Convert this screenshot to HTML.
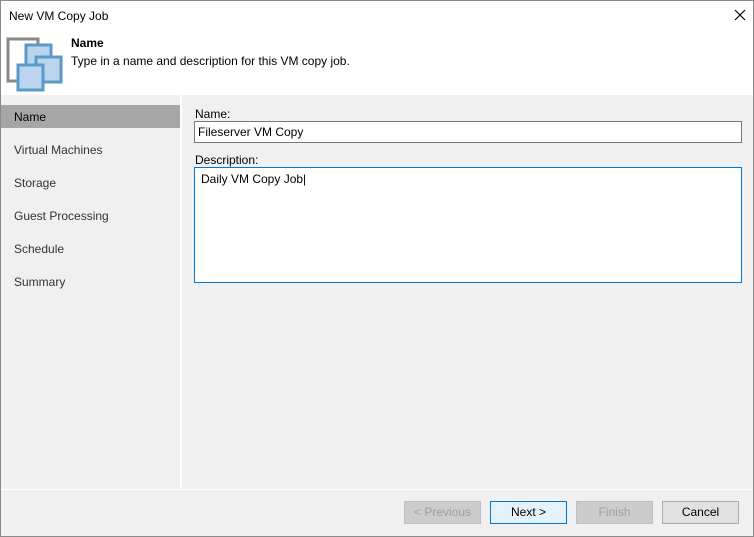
<!DOCTYPE html>
<html><head><style>
body{margin:0;width:754px;height:537px;overflow:hidden;font-family:"Liberation Sans",sans-serif;font-size:12px;color:#000;}
.win{position:absolute;left:0;top:0;width:752px;height:535px;border:1px solid #8a8a8a;background:#f0f0f0;}
.abs{position:absolute}
.btn{position:absolute;top:500px;width:75px;height:21px;border:1px solid #adadad;background:#e1e1e1;text-align:center;line-height:21px;font-size:12px}
.dis{color:#a0a0a0;background:#cccccc;border-color:#bfbfbf}
.nav{position:absolute;left:13px;font-size:12px;color:#333}
input,.ta{position:absolute;border:1px solid #7a7a7a;background:#fff;font:12px "Liberation Sans",sans-serif;box-sizing:border-box}
</style></head><body>
<div class="win">
<div class="abs" style="left:0;top:0;width:752px;height:94px;background:#fff"></div>
<div class="abs" style="left:8px;top:8px">New VM Copy Job</div>
<svg class="abs" style="left:733px;top:8px" width="12" height="12"><path d="M1 1L11 11M11 1L1 11" stroke="#000" stroke-width="1.2"/></svg>
<svg class="abs" style="left:4px;top:35px" width="60" height="58">
<path d="M3 33V3h30v8" fill="none" stroke="#888" stroke-width="3"/>
<path d="M3 33v12h12" fill="none" stroke="#888" stroke-width="3"/>
<rect x="21" y="9" width="25" height="25" fill="#bcd5ee" stroke="#5a9ac8" stroke-width="3"/>
<rect x="31" y="21" width="25" height="25" fill="#bcd5ee" stroke="#5a9ac8" stroke-width="3"/>
<rect x="13" y="29" width="25" height="25" fill="#bcd5ee" stroke="#5a9ac8" stroke-width="3"/>
</svg>
<div class="abs" style="left:70px;top:35px;font-weight:bold">Name</div>
<div class="abs" style="left:70px;top:53px">Type in a name and description for this VM copy job.</div>
<div class="abs" style="left:179px;top:94px;width:2px;height:394px;background:#fff"></div>
<div class="abs" style="left:0;top:104px;width:179px;height:23px;background:#a6a6a6"></div>
<div class="nav" style="top:109px;color:#000">Name</div>
<div class="nav" style="top:142px">Virtual Machines</div>
<div class="nav" style="top:175px">Storage</div>
<div class="nav" style="top:208px">Guest Processing</div>
<div class="nav" style="top:241px">Schedule</div>
<div class="nav" style="top:274px">Summary</div>
<div class="abs" style="left:194px;top:106px">Name:</div>
<input style="left:193px;top:120px;width:548px;height:22px;padding-left:3px" value="Fileserver VM Copy">
<div class="abs" style="left:194px;top:152px">Description:</div>
<div class="ta" style="left:193px;top:166px;width:548px;height:116px;border-color:#0078d7;padding:4px 6px">Daily VM Copy Job|</div>
<div class="abs" style="left:0;top:488px;width:752px;height:1px;background:#fff"></div>
<div class="btn dis" style="left:403px">&lt; Previous</div>
<div class="btn" style="left:489px;background:#e5f1fb;border-color:#0078d7">Next &gt;</div>
<div class="btn dis" style="left:575px">Finish</div>
<div class="btn" style="left:661px">Cancel</div>
</div>
</body></html>
